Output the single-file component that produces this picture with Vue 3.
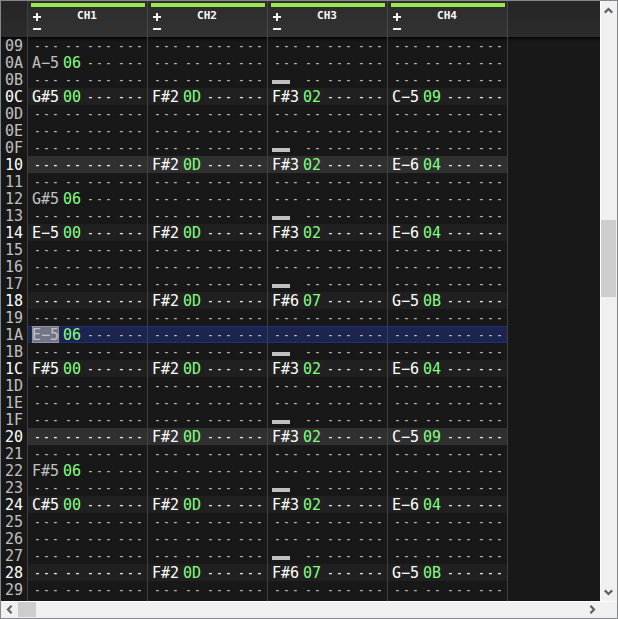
<script setup>
const channels = ['CH1', 'CH2', 'CH3', 'CH4']
const MINUS = '\u2212'

const notes = {
  0x0a: ['A-5 06'],
  0x0b: ['', '', 'off'],
  0x0c: ['G#5 00', 'F#2 0D', 'F#3 02', 'C-5 09'],
  0x0f: ['', '', 'off'],
  0x10: ['', 'F#2 0D', 'F#3 02', 'E-6 04'],
  0x12: ['G#5 06'],
  0x13: ['', '', 'off'],
  0x14: ['E-5 00', 'F#2 0D', 'F#3 02', 'E-6 04'],
  0x17: ['', '', 'off'],
  0x18: ['', 'F#2 0D', 'F#6 07', 'G-5 0B'],
  0x1a: ['E-5 06'],
  0x1b: ['', '', 'off'],
  0x1c: ['F#5 00', 'F#2 0D', 'F#3 02', 'E-6 04'],
  0x1f: ['', '', 'off'],
  0x20: ['', 'F#2 0D', 'F#3 02', 'C-5 09'],
  0x22: ['F#5 06'],
  0x23: ['', '', 'off'],
  0x24: ['C#5 00', 'F#2 0D', 'F#3 02', 'E-6 04'],
  0x27: ['', '', 'off'],
  0x28: ['', 'F#2 0D', 'F#6 07', 'G-5 0B'],
}

function field(kind, text, size) {
  return { kind: text ? kind : 'empty', size, text: text || '-'.repeat(size) }
}

const rows = []
for (let n = 0x09; n <= 0x29; n++) {
  const cells = channels.map((_, c) => {
    const value = (notes[n] && notes[n][c]) || ''
    const [note, inst] = value.split(' ')
    const first = value === 'off'
      ? { kind: 'off', size: 3, text: '' }
      : field('note', note && note.replace('-', MINUS), 3)
    return [first, field('inst', inst, 2), field('fx', '', 3), field('fx', '', 3)]
  })
  rows.push({
    n,
    label: n.toString(16).toUpperCase().padStart(2, '0'),
    beat: n % 4 === 0,
    bar: n % 16 === 0,
    cursor: n === 0x1a,
    cells,
  })
}
</script>

<template>
  <div class="window">
    <div class="upper">
      <div class="pattern">
        <div class="header">
          <div class="corner"></div>
          <div v-for="ch in channels" :key="ch" class="channel">
            <div class="level"></div>
            <div class="controls">
              <svg class="buttons" width="8" height="20" viewBox="0 0 8 20">
                <path d="M3 1h2v3h3v2H5v3H3V6H0V4h3zM0 16h8v2H0z" fill="#f4f4f4" />
              </svg>
              <span class="name">{{ ch }}</span>
            </div>
          </div>
        </div>
        <div class="rows">
          <div
            v-for="row in rows"
            :key="row.n"
            class="row"
            :class="{ beat: row.beat, bar: row.bar, cursor: row.cursor }"
          >
            <div class="number">{{ row.label }}</div>
            <div v-for="(cell, c) in row.cells" :key="c" class="cell">
              <span
                v-for="(f, k) in cell"
                :key="k"
                class="field"
                :class="[f.kind, 'w' + f.size, { selected: row.cursor && c === 0 && k === 0 }]"
              >{{ f.text }}</span>
            </div>
          </div>
          <div class="row tail">
            <div class="number"></div>
            <div v-for="ch in channels" :key="ch" class="cell"></div>
          </div>
        </div>
      </div>
      <div class="vscroll">
        <svg width="15" height="17" viewBox="0 0 15 17">
          <path d="M3.8 11.6 7.5 8l3.7 3.6" fill="none" stroke="#606060" stroke-width="2.2" />
        </svg>
        <div class="vthumb"></div>
        <svg class="end" width="15" height="17" viewBox="0 0 15 17">
          <path d="M3.8 6.4 7.5 10l3.7-3.6" fill="none" stroke="#606060" stroke-width="2.2" />
        </svg>
      </div>
    </div>
    <div class="hscroll">
      <svg width="17" height="15" viewBox="0 0 17 15">
        <path d="M10.6 3.8 7 7.5l3.6 3.7" fill="none" stroke="#606060" stroke-width="2.2" />
      </svg>
      <div class="hthumb"></div>
      <svg class="hend" width="17" height="15" viewBox="0 0 17 15">
        <path d="M7.4 3.8 11 7.5l-3.6 3.7" fill="none" stroke="#606060" stroke-width="2.2" />
      </svg>
    </div>
  </div>
</template>

<style>
body {
  margin: 0;
  overflow: hidden;
}
</style>

<style scoped>
.window {
  box-sizing: border-box;
  width: 618px;
  height: 619px;
  border: 1px solid #828790;
  background: #f0f0f0;
  display: flex;
  flex-direction: column;
  font-family: "DejaVu Sans Mono", monospace;
}
.upper {
  display: flex;
  height: 600px;
}
.pattern {
  width: 599px;
  height: 600px;
  background: #181818;
  overflow: hidden;
}
.header {
  display: flex;
  height: 36px;
  background: linear-gradient(#262626, #2b2b2b);
}
.corner {
  box-sizing: border-box;
  width: 27px;
  border-right: 1px solid #404040;
}
.channel {
  box-sizing: border-box;
  width: 120px;
  padding: 2px 2px 0 3px;
  border-right: 1px solid #484848;
  background: linear-gradient(#2c2c2c, #333333);
}
.level {
  height: 4px;
  background: #98e650;
}
.controls {
  display: flex;
  padding: 5px 0 0 2px;
}
.buttons {
  display: block;
}
.name {
  width: 92px;
  text-align: center;
  font-size: 11px;
  line-height: 11px;
  margin-top: -2px;
  font-weight: 700;
  color: #f8f8f8;
}
.rows {
  background: linear-gradient(#060606, #181818 4px);
  padding-left: 1px;
}
.row {
  display: flex;
  height: 17px;
  color: #c0c0c0;
  font-size: 15px;
  line-height: 19px;
  white-space: nowrap;
}
.tail {
  height: 3px;
}
.number {
  box-sizing: border-box;
  width: 26px;
  padding-left: 3px;
  border-right: 1px solid #404040;
}
.cell {
  box-sizing: border-box;
  width: 120px;
  padding-left: 4px;
  border-right: 1px solid #404040;
  display: flex;
  gap: 4px;
}
.beat {
  color: #ffffff;
}
.beat .cell {
  background: #202020;
}
.bar .cell {
  background: #303030;
}
.cursor .cell {
  background: linear-gradient(#20307c 1px, #1c2450 1px, #1c2450 16px, #20307c 16px);
}
.field {
  box-sizing: border-box;
  flex: none;
  height: 17px;
}
.w2 {
  width: 18px;
}
.w3 {
  width: 27px;
}
.inst {
  color: #80ff80;
}
.empty {
  font-size: 8px;
  font-weight: 700;
  line-height: 20px;
  letter-spacing: 4.184px;
  padding-left: 3px;
}
.off::before {
  content: "";
  display: block;
  width: 18px;
  height: 4px;
  margin-top: 9px;
  background: #c0c0c0;
}
.selected {
  background: #717586;
  box-shadow: inset 0 0 0 1px #8f939f;
}
.vscroll {
  box-sizing: border-box;
  width: 17px;
  height: 600px;
  border-left: 1px solid #ffffff;
  display: flex;
  flex-direction: column;
}
.vthumb {
  width: 15px;
  height: 77px;
  margin-top: 202px;
  background: #cdcdcd;
}
.end {
  margin-top: auto;
}
.hscroll {
  box-sizing: border-box;
  height: 17px;
  border-top: 1px solid #ffffff;
  display: flex;
}
.hthumb {
  width: 18px;
  height: 15px;
  background: #cdcdcd;
}
.hend {
  margin-left: auto;
  margin-right: 17px;
}
</style>
